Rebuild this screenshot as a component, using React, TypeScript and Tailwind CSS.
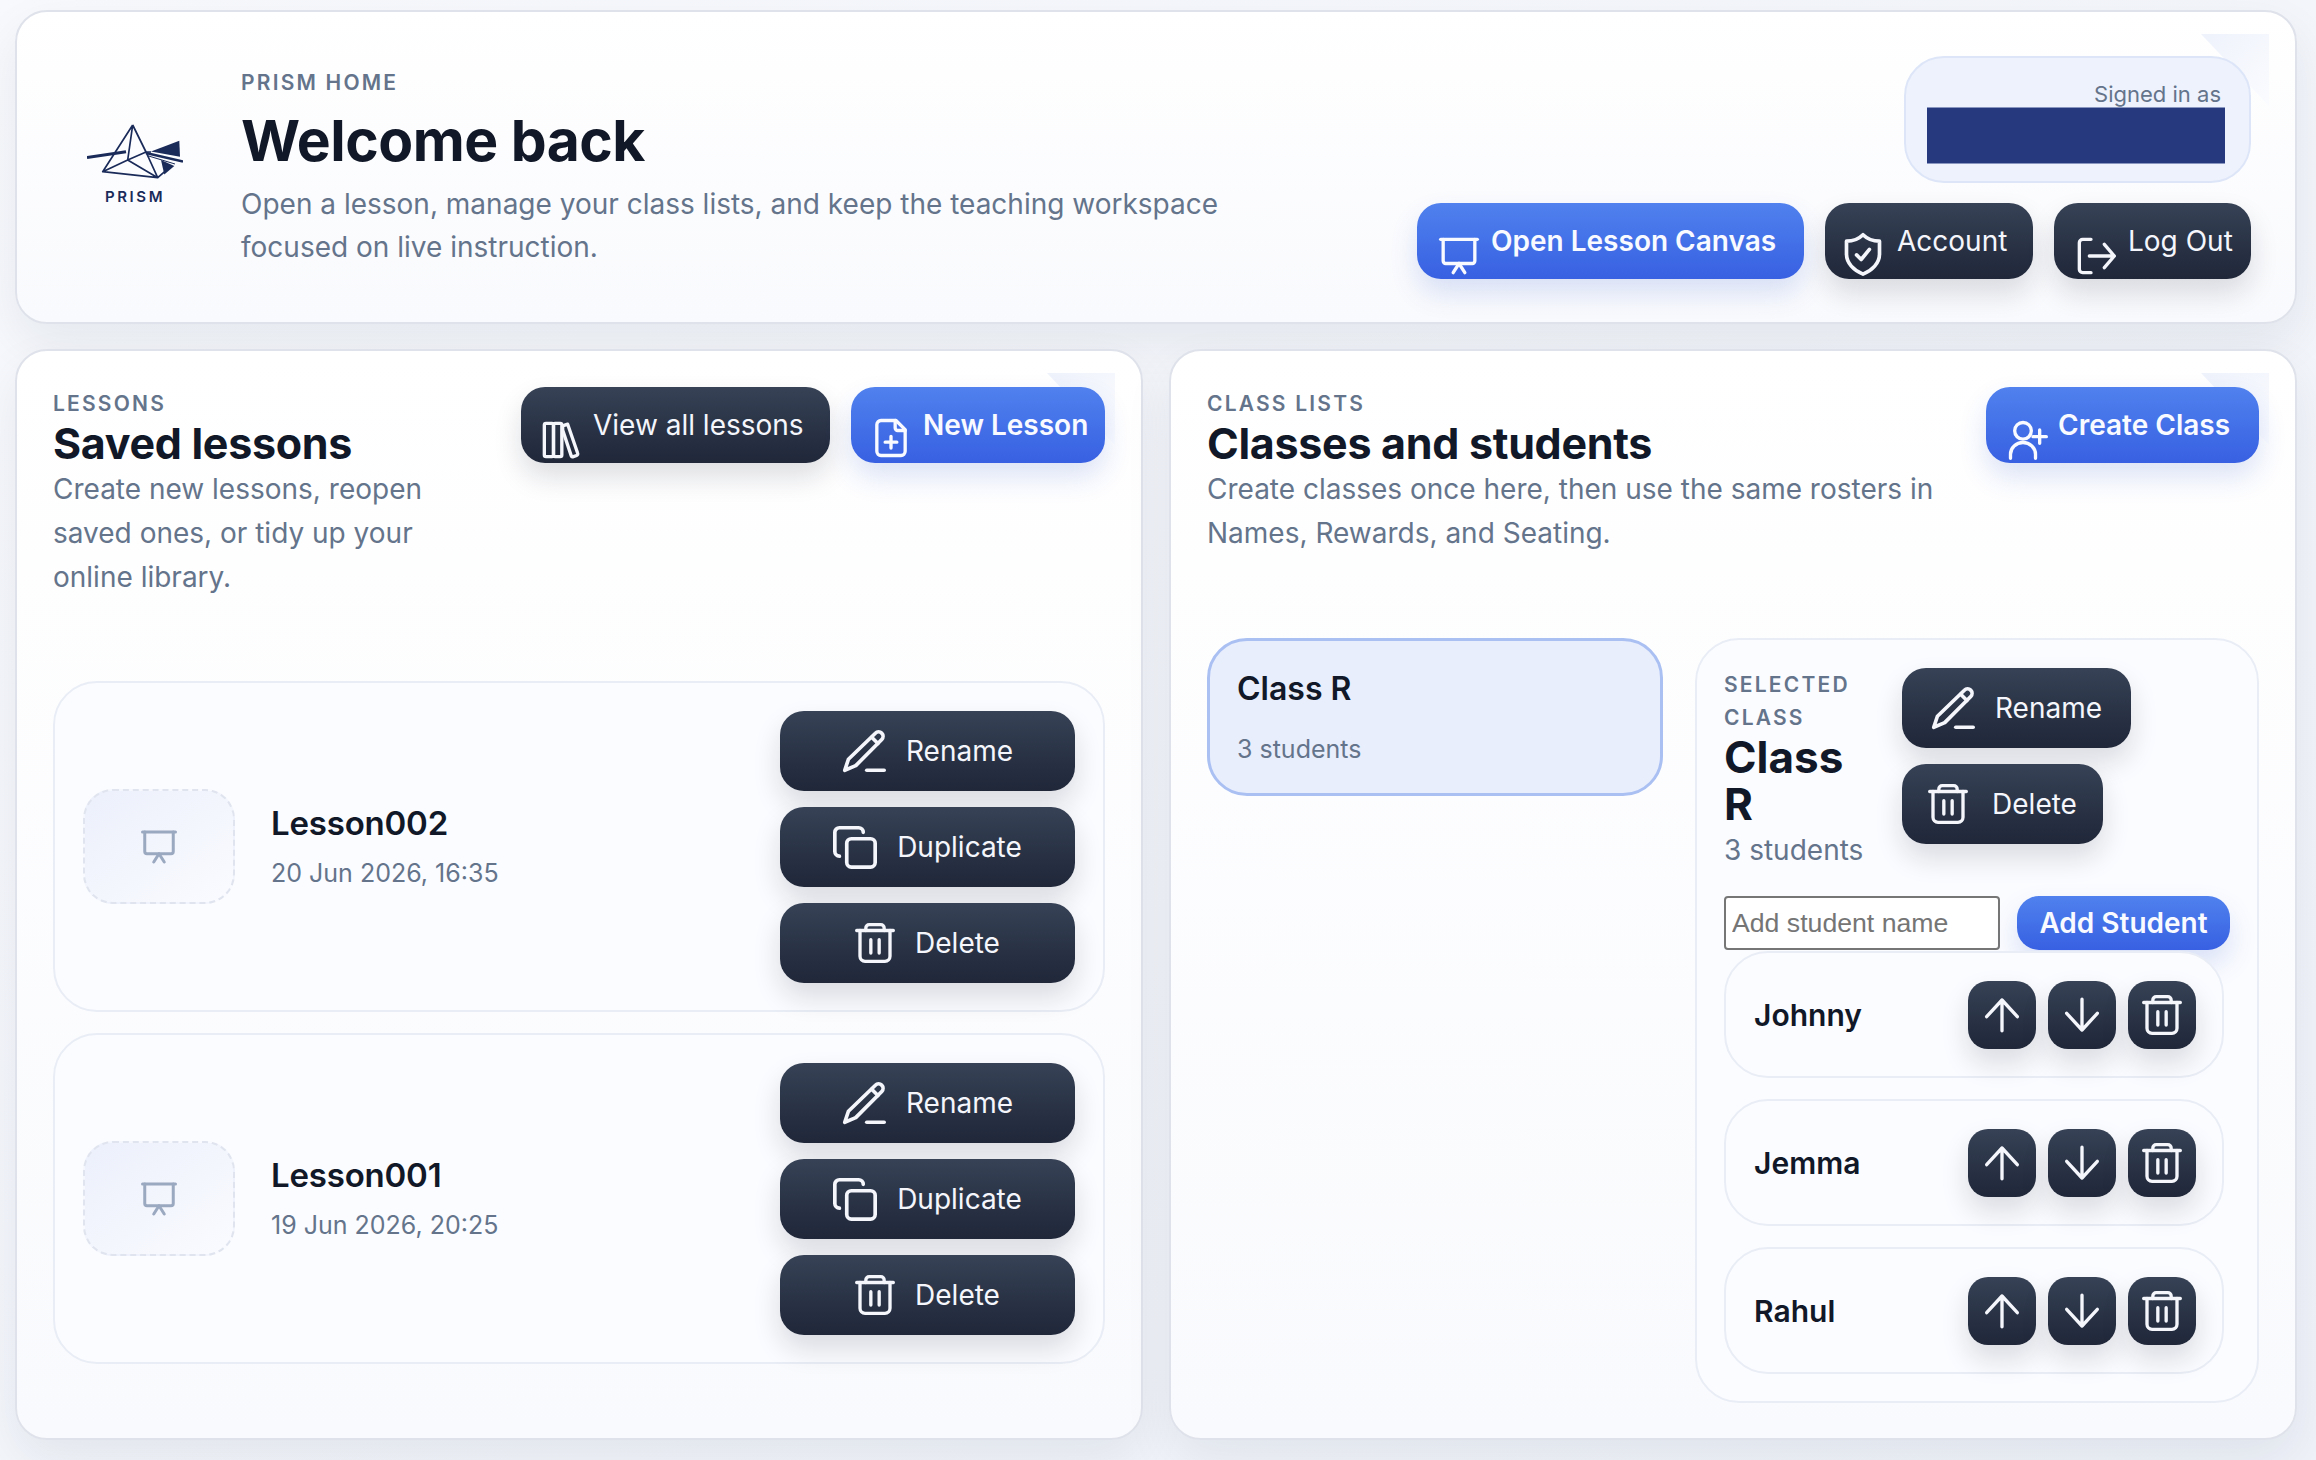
import React from "react";

type IP = { className?: string };
const base = { fill: "none", stroke: "currentColor", strokeWidth: 2, strokeLinecap: "round", strokeLinejoin: "round", viewBox: "0 0 24 24" } as const;

const Board = ({ className }: IP) => (
  <svg {...base} className={className}>
    <path d="M1 2h22" />
    <path d="M2.5 2v13a1.5 1.5 0 0 0 1.5 1.5h16a1.5 1.5 0 0 0 1.5-1.5V2" />
    <path d="M12 16.5 8.5 22M12 16.5l3.5 5.5" />
  </svg>
);
const Shield = ({ className }: IP) => (
  <svg {...base} className={className}>
    <path d="M12 1.5C14.5 4 17.5 5 21 5v7c0 5-4 9-9 11C7 21 3 17 3 12V5c3.5 0 6.5-1 9-3.5Z" />
    <path d="m8.5 12.5 2.5 2.5 4.5-5.5" />
  </svg>
);
const LogOut = ({ className }: IP) => (
  <svg {...base} className={className}>
    <path d="M9 2H4a2 2 0 0 0-2 2v16a2 2 0 0 0 2 2h5" />
    <path d="M8 12h15M17 5l6 7-6 7" />
  </svg>
);
const Books = ({ className }: IP) => (
  <svg {...base} className={className}>
    <rect x="2" y="2" width="5.5" height="20" rx="1" />
    <rect x="7.5" y="2" width="5" height="20" rx="1" />
    <path d="m13 3.5 3-1 6 17.5a1 1 0 0 1-.6 1.3l-2 .7a1 1 0 0 1-1.3-.6L13 6Z" />
  </svg>
);
const FilePlus = ({ className }: IP) => (
  <svg {...base} className={className}>
    <path d="M15 1.5H6a2.5 2.5 0 0 0-2.5 2.5v16A2.5 2.5 0 0 0 6 22.5h12a2.5 2.5 0 0 0 2.5-2.5V7Z" />
    <path d="M14.5 1.5V6a1.5 1.5 0 0 0 1.5 1.5h4.5" />
    <path d="M8.5 14.5h7M12 11v7" />
  </svg>
);
const UserPlus = ({ className }: IP) => (
  <svg {...base} className={className}>
    <circle cx="9" cy="6.5" r="5" />
    <path d="M1.5 23v-2.5a7.5 7 0 0 1 15 0V23" />
    <path d="M15 10h8M19 6v8" />
  </svg>
);
const Pencil = ({ className }: IP) => (
  <svg {...base} className={className}>
    <path d="M18.2 2.3a2.4 2.4 0 0 1 3.5 3.4L7.5 20l-6 2.5 2-6Z" />
    <path d="m16.2 4.5 3.4 3.4" />
    <path d="M13.5 22.5H23" />
  </svg>
);
const Copy = ({ className }: IP) => (
  <svg {...base} className={className}>
    <rect x="7.5" y="7.5" width="15.5" height="15.5" rx="2.5" />
    <path d="M3.5 17A2.5 2.5 0 0 1 1 14.5V4a2.5 2.5 0 0 1 2.5-2.5H14A2.5 2.5 0 0 1 16.5 4" />
  </svg>
);
const Trash = ({ className }: IP) => (
  <svg {...base} className={className}>
    <path d="M1 4.5h22" />
    <path d="M6.5 4.5V3a2 2 0 0 1 2-2h7a2 2 0 0 1 2 2v1.5" />
    <path d="M3 4.5V20a3 3 0 0 0 3 3h12a3 3 0 0 0 3-3V4.5" />
    <path d="M9.5 10v8M14.5 10v8" />
  </svg>
);
const ArrowUp = ({ className }: IP) => (
  <svg {...base} className={className}>
    <path d="M12 21.5V3M2.8 13 12 3l9.2 10" />
  </svg>
);
const ArrowDown = ({ className }: IP) => (
  <svg {...base} className={className}>
    <path d="M12 2.5V21M2.8 11l9.2 10 9.2-10" />
  </svg>
);

const Logo = () => (
  <svg viewBox="0 0 96 55" className="w-[96px] h-[55px] text-[#1a2b5a]" fill="none" stroke="currentColor" strokeWidth="1.7" strokeLinejoin="round">
    <path d="M45.7 1 15.7 47.7l55 6 11-9.5M45.7 1 40.7 36 15.7 47.7M40.7 36l30 17.7L59 28l-18.3 8M45.7 1 59 28l5 0" />
    <path d="M0 33.5 39 27.7" strokeWidth="3" />
    <path d="M59 29 96 37.5" strokeWidth="2.6" />
    <path d="M60 31.5 88 40" strokeWidth="1" />
    <path d="M64 27.5 92.3 16.7 93 32.7Z" fill="currentColor" stroke="none" />
    <path d="M74 36 87.3 42 77.3 50.5Z" fill="currentColor" stroke="none" />
  </svg>
);

const dark = "bg-linear-to-b from-[#374256] to-[#1f2739] text-[#f4f6fc] shadow-[0_14px_28px_rgba(15,23,42,0.14)]";
const blue = "bg-linear-to-b from-[#5081ee] to-[#3860e2] text-[#f8faff] shadow-[0_14px_28px_rgba(37,80,200,0.16)]";

const Corner = () => (
  <div className="absolute top-[22px] right-[26px] w-[68px] h-[72px] bg-linear-to-br from-[#eef2fb] to-[#fbfcff] [clip-path:polygon(0_0,100%_0,100%_100%)]" />
);

const Kicker = ({ children, className = "" }: { children: React.ReactNode; className?: string }) => (
  <div className={`text-[21px] leading-[33px] font-semibold tracking-[2.2px] text-[#64748b] ${className}`}>{children}</div>
);

const HeadBtn = ({ tone, icon, label, cls, iconCls, text }: { tone: string; icon: React.ReactNode; label: string; cls: string; iconCls?: string; text: string }) => (
  <button className={`flex items-baseline h-[76px] pt-[12px] rounded-[24px] ${tone} ${cls}`}>
    <span className={`mb-[3px] self-end ${iconCls ?? ""}`}>{icon}</span>
    <span className={`text-[28px] leading-[52px] ${text}`}>{label}</span>
  </button>
);

const ActionBtn = ({ icon, label, cls, text = "" }: { icon: React.ReactNode; label: string; cls: string; text?: string }) => (
  <button className={`flex items-center justify-center h-[80px] rounded-[24px] ${dark} ${cls}`}>
    {icon}
    <span className={`text-[28px] leading-[40px] font-normal ${text}`}>{label}</span>
  </button>
);

const LessonCard = ({ name, date }: { name: string; date: string }) => (
  <div className="flex items-center h-[331px] px-[28px] rounded-[44px] border-2 border-[#e9edf5] bg-[#fbfcff]">
    <div className="flex items-center justify-center w-[152px] h-[115px] rounded-[30px] border-2 border-dashed border-[#dfe4ee] bg-linear-to-br from-[#ecf0fb] to-[#fafbff]">
      <Board className="w-[36px] h-[36px] text-[#9aa8c0]" />
    </div>
    <div className="ml-[36px]">
      <div className="text-[33px] leading-[48px] font-semibold text-[#111827] tracking-[-0.2px]">{name}</div>
      <div className="mt-[4px] text-[25px] leading-[44px] text-[#64748b]">{date}</div>
    </div>
    <div className="ml-auto flex flex-col gap-[16px] w-[295px]">
      <ActionBtn icon={<Pencil className="w-[44px] h-[44px]" />} label="Rename" cls="gap-[20px]" />
      <ActionBtn icon={<Copy className="w-[44px] h-[44px]" />} label="Duplicate" cls="gap-[20px]" />
      <ActionBtn icon={<Trash className="w-[40px] h-[44px]" />} label="Delete" cls="gap-[20px]" />
    </div>
  </div>
);

const IconBtn = ({ children }: { children: React.ReactNode }) => (
  <button className={`flex items-center justify-center w-[68px] h-[68px] rounded-[20px] ${dark}`}>{children}</button>
);

const StudentRow = ({ name }: { name: string }) => (
  <div className="flex items-center justify-between w-[500px] h-[127px] pl-[28px] pr-[26px] rounded-[44px] border-2 border-[#e9edf5] bg-[#fbfcff]">
    <div className="text-[30px] leading-[44px] font-semibold text-[#111827]">{name}</div>
    <div className="flex gap-[12px]">
      <IconBtn><ArrowUp className="w-[40px] h-[40px]" /></IconBtn>
      <IconBtn><ArrowDown className="w-[40px] h-[40px]" /></IconBtn>
      <IconBtn><Trash className="w-[40px] h-[44px]" /></IconBtn>
    </div>
  </div>
);

const panel = "relative h-[1091px] rounded-[32px] border-2 border-[#dfe2ea] bg-linear-to-b from-white to-[#f9fafd] shadow-[0_20px_50px_rgba(15,23,42,0.07)]";

export default function App() {
  return (
    <div className="w-[2316px] h-[1460px] overflow-hidden pt-[10px] pl-[15px] pr-[19px] bg-linear-to-br from-[#f7f9fd] to-[#eff2f9] font-[Inter,sans-serif]">
      <header className="relative flex items-center justify-between h-[314px] pl-[70px] pr-[44px] rounded-[32px] border-2 border-[#dfe2ea] bg-linear-to-b from-white to-[#f9fafd] shadow-[0_20px_50px_rgba(15,23,42,0.07)]">
        <Corner />
        <div className="relative flex items-center">
          <div className="flex flex-col items-center w-[96px] mt-[-4px]">
            <Logo />
            <div className="mt-[8px] text-[15px] leading-[20px] font-semibold tracking-[2.6px] text-[#1a2b5a]">PRISM</div>
          </div>
          <div className="ml-[58px]">
            <Kicker>PRISM HOME</Kicker>
            <h1 className="mt-[6px] text-[57px] leading-[72px] font-bold text-[#111827] tracking-[-0.5px]">Welcome back</h1>
            <p className="mt-[6px] w-[1060px] text-[28px] leading-[43px] text-[#64748b]">Open a lesson, manage your class lists, and keep the teaching workspace focused on live instruction.</p>
          </div>
        </div>
        <div className="relative flex flex-col items-end gap-[20px]">
          <div className="flex flex-col w-[347px] h-[127px] pt-[23px] pl-[21px] pr-[24px] rounded-[40px] border-2 border-[#dde6f8] bg-[#eef2fc]">
            <div className="pr-[4px] text-right text-[22px] leading-[26px] text-[#64748b]">Signed in as</div>
            <div className="h-[57px] border-y border-[#8896c0] bg-[#26397f]" />
          </div>
          <div className="flex gap-[21px]">
            <HeadBtn tone={blue} icon={<Board className="w-[44px] h-[40px]" />} label="Open Lesson Canvas" cls="w-[387px] pl-[20px]" iconCls="mr-[10px]" text="font-semibold" />
            <HeadBtn tone={dark} icon={<Shield className="w-[44px] h-[44px]" />} label="Account" cls="w-[208px] pl-[16px]" iconCls="mr-[12px]" text="font-normal" />
            <HeadBtn tone={dark} icon={<LogOut className="w-[40px] h-[40px]" />} label="Log Out" cls="w-[197px] pl-[22px]" iconCls="mr-[12px]" text="font-normal" />
          </div>
        </div>
      </header>

      <div className="grid grid-cols-2 gap-[26px] mt-[25px]">
        <section className={`${panel} p-[36px]`}>
          <Corner />
          <div className="relative flex items-start justify-between h-[211px]">
            <div className="w-[420px]">
              <Kicker>LESSONS</Kicker>
              <h2 className="text-[43px] leading-[47px] font-bold text-[#111827] tracking-[-0.3px]">Saved lessons</h2>
              <p className="text-[28px] leading-[44px] text-[#64748b]">Create new lessons, reopen saved ones, or tidy up your online library.</p>
            </div>
            <div className="flex gap-[21px]">
              <HeadBtn tone={dark} icon={<Books className="w-[40px] h-[40px]" />} label="View all lessons" cls="w-[309px] pl-[20px]" iconCls="mr-[12px]" text="font-normal" />
              <HeadBtn tone={blue} icon={<FilePlus className="w-[40px] h-[44px]" />} label="New Lesson" cls="w-[254px] pl-[20px]" iconCls="mr-[12px]" text="font-semibold" />
            </div>
          </div>
          <div className="relative mt-[83px] flex flex-col gap-[21px]">
            <LessonCard name="Lesson002" date="20 Jun 2026, 16:35" />
            <LessonCard name="Lesson001" date="19 Jun 2026, 20:25" />
          </div>
        </section>

        <section className={`${panel} p-[36px]`}>
          <Corner />
          <div className="relative flex items-start justify-between h-[168px]">
            <div className="w-[760px]">
              <Kicker>CLASS LISTS</Kicker>
              <h2 className="text-[43px] leading-[47px] font-bold text-[#111827] tracking-[-0.3px]">Classes and students</h2>
              <p className="text-[28px] leading-[44px] text-[#64748b]">Create classes once here, then use the same rosters in Names, Rewards, and Seating.</p>
            </div>
            <HeadBtn tone={blue} icon={<UserPlus className="w-[44px] h-[40px]" />} label="Create Class" cls="w-[273px] pl-[20px]" iconCls="mr-[8px]" text="font-semibold" />
          </div>
          <div className="relative mt-[83px] flex items-start gap-[32px]">
            <div className="w-[456px] h-[158px] pt-[26px] pl-[27px] rounded-[40px] border-[3px] border-[#aac0f3] bg-[#e9eefc]">
              <div className="text-[32px] leading-[44px] font-semibold text-[#111827]">Class R</div>
              <div className="mt-[16px] text-[25px] leading-[44px] text-[#64748b]">3 students</div>
            </div>
            <div className="w-[564px] h-[765px] pt-[28px] pl-[27px] rounded-[44px] border-2 border-[#e9edf5] bg-[#fbfcff]">
              <div className="flex items-start">
                <div className="w-[178px] pr-[28px]">
                  <Kicker>SELECTED CLASS</Kicker>
                  <div className="text-[44px] leading-[47px] font-bold text-[#111827]">Class R</div>
                  <div className="text-[28px] leading-[44px] text-[#64748b]">3 students</div>
                </div>
                <div className="flex flex-col items-start gap-[16px]">
                  <ActionBtn icon={<Pencil className="w-[44px] h-[44px]" />} label="Rename" cls="w-[229px] gap-[20px]" />
                  <ActionBtn icon={<Trash className="w-[40px] h-[44px]" />} label="Delete" cls="w-[201px] gap-[24px]" />
                </div>
              </div>
              <div className="mt-[24px] flex items-center gap-[17px]">
                <input placeholder="Add student name" className="w-[276px] h-[54px] px-[6px] rounded-[4px] border-2 border-[#767676] bg-white text-[26.67px] font-['Liberation_Sans',sans-serif] placeholder:text-[#757575]" />
                <button className={`w-[213px] h-[54px] rounded-[22px] text-[28px] leading-[40px] font-semibold ${blue}`}>Add Student</button>
              </div>
              <div className="mt-[1px] flex flex-col gap-[21px]">
                <StudentRow name="Johnny" />
                <StudentRow name="Jemma" />
                <StudentRow name="Rahul" />
              </div>
            </div>
          </div>
        </section>
      </div>
    </div>
  );
}
